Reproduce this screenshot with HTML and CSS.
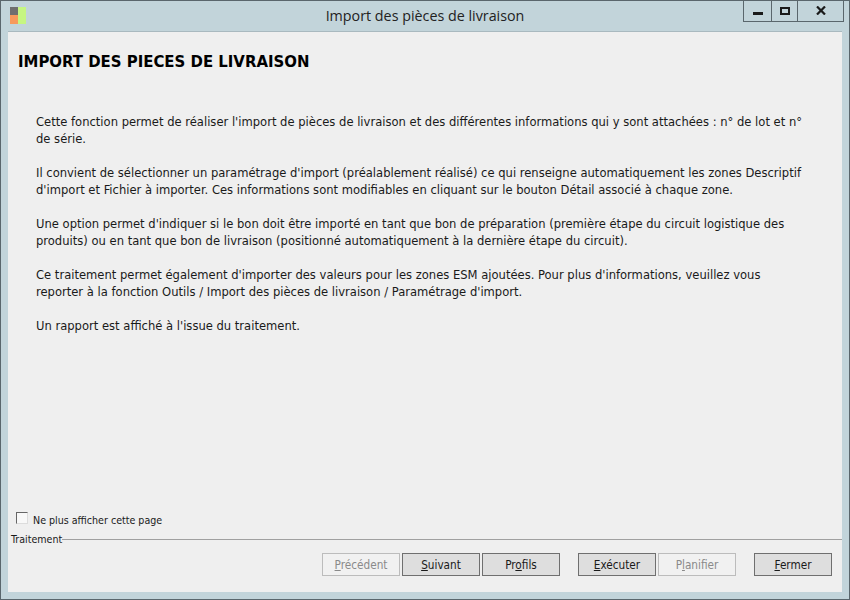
FILE: index.html
```html
<!DOCTYPE html>
<html lang="fr">
<head>
    <meta charset="UTF-8">
    <title>Import des pièces de livraison</title>
    <link rel="stylesheet" href="styles.css">
</head>
<body>

<div class="window">
    <div class="titlebar">
        <svg class="app-icon" width="18" height="18" viewBox="0 0 18 18">
            <rect x="0" y="0" width="8" height="8" fill="#6f6f6f"/>
            <rect x="0" y="8" width="8" height="9" fill="#f79a5c"/>
            <rect x="8" y="0" width="8" height="17" fill="#c6f682"/>
        </svg>
        <div class="title">Import des pièces de livraison</div>
        <div class="win-buttons">
            <div class="win-btn btn-min"><span class="min-glyph"></span></div>
            <div class="win-btn btn-max"><span class="max-glyph"></span></div>
            <div class="win-btn btn-close">
                <svg width="10" height="9" viewBox="0 0 10 9">
                    <path d="M1 .5 L9 8.5 M9 .5 L1 8.5" stroke="#1a1a1a" stroke-width="2.2" fill="none"/>
                </svg>
            </div>
        </div>
    </div>

    <div class="content">
        <h1>IMPORT DES PIECES DE LIVRAISON</h1>

        <div class="description">
            <p>Cette fonction permet de réaliser l'import de pièces de livraison et des différentes informations qui y sont attachées : n° de lot et n°<br>de série.</p>
            <p>Il convient de sélectionner un paramétrage d'import (préalablement réalisé) ce qui renseigne automatiquement les zones Descriptif<br>d'import et Fichier à importer. Ces informations sont modifiables en cliquant sur le bouton Détail associé à chaque zone.</p>
            <p>Une option permet d'indiquer si le bon doit être importé en tant que bon de préparation (première étape du circuit logistique des<br>produits) ou en tant que bon de livraison (positionné automatiquement à la dernière étape du circuit).</p>
            <p>Ce traitement permet également d'importer des valeurs pour les zones ESM ajoutées. Pour plus d'informations, veuillez vous<br>reporter à la fonction Outils / Import des pièces de livraison / Paramétrage d'import.</p>
            <p>Un rapport est affiché à l'issue du traitement.</p>
        </div>

        <label class="no-show">
            <span class="checkbox"></span>
            Ne plus afficher cette page
        </label>

        <div class="group-title">
            <span>Traitement</span>
            <div class="group-line"></div>
        </div>

        <div class="actions">
            <button class="btn" disabled><u>P</u>récédent</button>
            <button class="btn"><u>S</u>uivant</button>
            <button class="btn">Pr<u>o</u>fils</button>
            <button class="btn sep"><u>E</u>xécuter</button>
            <button class="btn" disabled>P<u>l</u>anifier</button>
            <button class="btn sep"><u>F</u>ermer</button>
        </div>
    </div>
</div>

</body>
</html>
```

FILE: styles.css
```css
html, body {
    margin: 0;
    padding: 0;
}
body {
    width: 850px;
    height: 600px;
    overflow: hidden;
    font-family: "DejaVu Sans Condensed", "Noto Sans", sans-serif;
    font-size: 12.85px;
    color: #1a1a1a;
}
.window {
    box-sizing: border-box;
    width: 850px;
    height: 600px;
    display: flex;
    flex-direction: column;
    background-color: #c2d4da;
    border: 1px solid #5a666c;
    padding: 0 7px 7px 7px;
}
.titlebar {
    position: relative;
    height: 30px;
    flex-shrink: 0;
}
.app-icon {
    position: absolute;
    left: 2px;
    top: 6px;
}
.title {
    text-align: center;
    font-family: "Open Sans", sans-serif;
    font-size: 14.3px;
    line-height: 30px;
    color: #222;
}
.win-buttons {
    position: absolute;
    right: -2px;
    top: -1px;
    height: 21px;
    display: flex;
    border: 1px solid #5a666c;
    border-top: none;
}
.win-btn {
    display: flex;
    align-items: center;
    justify-content: center;
    border-left: 1px solid #5a666c;
}
.win-btn:first-child {
    border-left: none;
}
.btn-min {
    width: 27px;
}
.btn-max {
    width: 25px;
}
.btn-close {
    width: 45px;
}
.min-glyph {
    width: 10px;
    height: 3px;
    background-color: #1a1a1a;
    margin-top: 5px;
}
.max-glyph {
    box-sizing: border-box;
    width: 10px;
    height: 8px;
    border: 2px solid #1a1a1a;
}
.content {
    flex: 1;
    display: flex;
    flex-direction: column;
    background-color: #efefef;
    border-top: 1px solid #a9b9bf;
}
h1 {
    margin: 20px 0 0 10px;
    font-size: 16.6px;
    line-height: 20px;
    font-weight: bold;
    color: #000;
}
.description {
    margin: 41px 0 0 28px;
    flex: 1;
    white-space: nowrap;
}
.description p {
    margin: 0 0 17px 0;
    line-height: 17px;
}
.no-show {
    display: flex;
    align-items: center;
    gap: 5px;
    margin-left: 8px;
    height: 14px;
    font-size: 10.6px;
}
.checkbox {
    box-sizing: border-box;
    width: 12px;
    height: 12px;
    background-color: #f8f8f8;
    border: 1px solid #dcdcdc;
    border-top-color: #666;
    border-left-color: #666;
    margin-bottom: 4px;
}
.group-title {
    display: flex;
    align-items: center;
    margin: 5px 0 0 3px;
    font-size: 10.6px;
    line-height: 14px;
}
.group-line {
    flex: 1;
    height: 1px;
    background-color: #a0a0a0;
}
.actions {
    display: flex;
    gap: 2px;
    margin: 7px 10px 16px 0;
    justify-content: flex-end;
}
.btn {
    box-sizing: border-box;
    width: 78px;
    height: 23px;
    padding: 0;
    font-family: inherit;
    font-size: 11.7px;
    color: #1a1a1a;
    background-color: #dedede;
    border: 1px solid #6f6f6f;
}
.btn:disabled {
    color: #8a8a8a;
    background-color: #f1f1f1;
    border-color: #bcbcbc;
}
.btn.sep {
    margin-left: 16px;
}
```
